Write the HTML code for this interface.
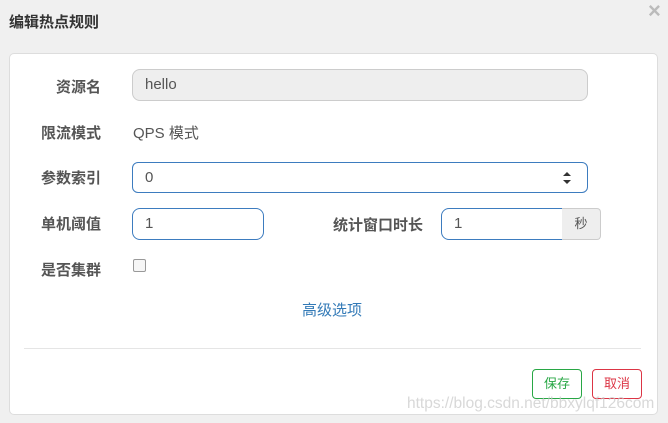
<!DOCTYPE html><html><head><meta charset="utf-8"><style>
body{margin:0;width:668px;height:423px;background:#f0f0f0;font-family:"Liberation Sans","Noto Sans CJK SC",sans-serif;position:relative;overflow:hidden;color:#555}
.a{position:absolute}
.t{left:9px;top:11px;font-size:15px;font-weight:bold;color:#333}
.x{left:648px;top:-2px;font-size:22px;color:#bbb;font-weight:bold}
.p{left:9px;top:53px;width:647px;height:360px;background:#fff;border:1px solid #ddd;border-radius:5px}
.l{font-size:15px;font-weight:bold;color:#555;text-align:right;width:92px;left:9px;line-height:20px}
.in{box-sizing:border-box;border:1px solid #ccc;border-radius:8px;font-size:15px;color:#555;padding-left:12px;line-height:29px}
.b{border-color:#3d7cbf}
.btn{box-sizing:border-box;width:50px;height:30px;border:1px solid;border-radius:4px;font-size:13px;text-align:center;line-height:28px;top:369px;background:#fff}
</style></head><body>
<div class="a t">编辑热点规则</div>
<div class="a x">×</div>
<div class="a p"></div>
<div class="a l" style="top:78px">资源名</div>
<div class="a in" style="left:132px;top:69px;width:456px;height:32px;background:#eee">hello</div>
<div class="a l" style="top:124px">限流模式</div>
<div class="a" style="left:133px;top:124px;font-size:15px;line-height:20px">QPS 模式</div>
<div class="a l" style="top:169px">参数索引</div>
<div class="a in b" style="left:132px;top:162px;width:456px;height:31px;border-radius:6px">0</div>
<svg class="a" style="left:562px;top:171px" width="10" height="14"><path d="M1 5L5 1L9 5ZM1 9L5 13L9 9Z" fill="#333"/></svg>
<div class="a l" style="top:215px">单机阈值</div>
<div class="a in b" style="left:132px;top:208px;width:132px;height:32px">1</div>
<div class="a" style="left:333px;top:216px;font-size:15px;font-weight:bold;line-height:20px">统计窗口时长</div>
<div class="a in b" style="left:441px;top:208px;width:122px;height:32px;border-radius:8px 0 0 8px">1</div>
<div class="a" style="left:562px;top:208px;width:39px;height:32px;box-sizing:border-box;border:1px solid #ccc;border-left:0;border-radius:0 4px 4px 0;background:#eee;text-align:center;line-height:30px;font-size:13px">秒</div>
<div class="a l" style="top:261px">是否集群</div>
<div class="a" style="left:133px;top:259px;width:11px;height:11px;border:1px solid #999;border-radius:2px;background:#f6f6f6"></div>
<div class="a" style="left:302px;top:301px;font-size:15px;color:#337ab7;line-height:20px">高级选项</div>
<div class="a" style="left:24px;top:348px;width:617px;height:1px;background:#e5e5e5"></div>
<div class="a btn" style="left:532px;border-color:#28a745;color:#28a745">保存</div>
<div class="a btn" style="left:592px;border-color:#dc3545;color:#dc3545">取消</div>
<div class="a" style="left:407px;top:395px;font-size:15.5px;color:rgba(200,200,200,.7)">https://blog.csdn.net/bbxylqf126com</div>
</body></html>
